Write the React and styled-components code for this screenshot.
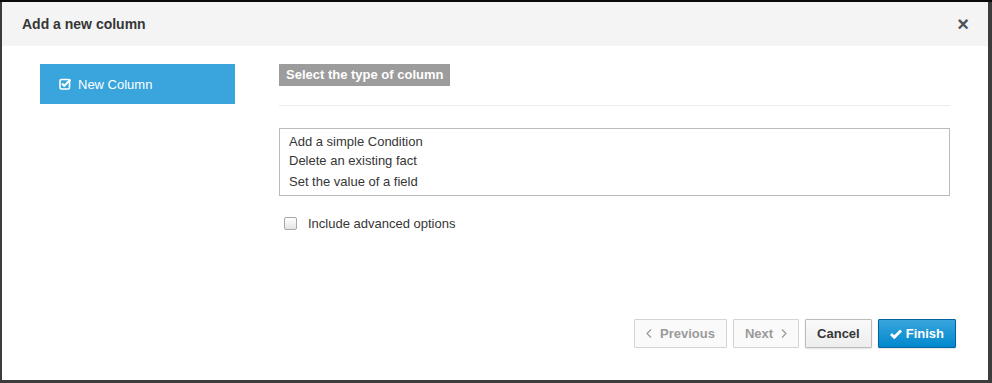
import styled, { createGlobalStyle } from 'styled-components';

const Global = createGlobalStyle`
  html, body {
    margin: 0;
    padding: 0;
    background: #3c3c3c;
    font-family: "Liberation Sans", Arial, sans-serif;
  }
`;

const Backdrop = styled.div`
  width: 992px;
  height: 383px;
  box-sizing: border-box;
  border-top: 2px solid #0a0a0a;
  padding: 0 4px 3px 2px;
  background: #3c3c3c;
`;

const Modal = styled.div`
  height: 100%;
  background: #fff;
  display: flex;
  flex-direction: column;
`;

const Header = styled.header`
  height: 44px;
  background: #f4f4f4;
  display: flex;
  align-items: center;
  justify-content: space-between;
  padding: 0 19px 0 20px;
  flex-shrink: 0;
`;

const Title = styled.h4`
  margin: 0;
  font-size: 14px;
  font-weight: 700;
  color: #363636;
`;

const Close = styled.span`
  font-size: 20px;
  font-weight: 700;
  color: #4d5258;
  line-height: 1;
`;

const Body = styled.div`
  flex: 1;
  display: flex;
  gap: 44px;
  padding: 18px 38px 0 38px;
`;

const Nav = styled.div`
  width: 195px;
  flex-shrink: 0;
`;

const NavItem = styled.div`
  height: 40px;
  background: #39a5dc;
  color: #fff;
  font-size: 13px;
  display: flex;
  align-items: center;
  gap: 6px;
  padding-left: 19px;
`;

const Content = styled.div`
  flex: 1;
`;

const StepLabel = styled.div`
  width: fit-content;
  background: #9c9c9c;
  color: #fff;
  font-size: 13px;
  font-weight: 700;
  padding: 3px 7px 4px;
  line-height: 15px;
`;

const Rule = styled.hr`
  border: 0;
  border-top: 1px solid #ededed;
  margin: 19px 0 22px;
`;

const ListBox = styled.div`
  border: 1px solid #bbb;
  padding: 3px 9px 3px;
`;

const Option = styled.div`
  font-size: 13px;
  color: #363636;
  line-height: 20px;
  height: ${p => p.$h || 19}px;
`;

const CheckRow = styled.label`
  display: flex;
  align-items: center;
  gap: 11px;
  margin: 20px 0 0 5px;
  font-size: 13px;
  color: #363636;
`;

const Box = styled.span`
  width: 11px;
  height: 11px;
  border: 1px solid #a8a8a8;
  border-radius: 2px;
  background: linear-gradient(#fff, #e4e4e4);
`;

const Footer = styled.footer`
  display: flex;
  justify-content: flex-end;
  gap: 6px;
  padding: 0 32px 32px 0;
`;

const Button = styled.button`
  height: 29px;
  box-sizing: border-box;
  font-family: "Liberation Sans", Arial, sans-serif;
  font-size: 13px;
  font-weight: 700;
  padding: 0 ${p => p.$px || 12}px;
  display: flex;
  align-items: center;
  gap: ${p => p.$gap || 6}px;
  border-radius: 1px;
  border: 1px solid ${p => (p.$primary ? '#00659c' : p.$disabled ? '#d4d4d4' : '#bbb')};
  color: ${p => (p.$primary ? '#fff' : p.$disabled ? '#9a9a9a' : '#363636')};
  background: ${p =>
    p.$primary
      ? 'linear-gradient(#39a5dc, #0088ce)'
      : p.$disabled
      ? '#fafafa'
      : 'linear-gradient(#fafafa, #ededed)'};
  box-shadow: ${p => (p.$disabled ? 'none' : '0 1px 2px rgba(0,0,0,0.12)')};
`;

const Chevron = ({ dir }) => (
  <svg width="6" height="9" viewBox="0 0 6 9">
    <polyline
      points={dir === 'left' ? '5,0.5 1,4.5 5,8.5' : '1,0.5 5,4.5 1,8.5'}
      fill="none"
      stroke="#9a9a9a"
      strokeWidth="1.2"
    />
  </svg>
);

const CheckSquare = () => (
  <svg width="13" height="12" viewBox="0 0 13 12">
    <rect x="1" y="1.5" width="9.5" height="9.5" rx="1.5" fill="none" stroke="#fff" strokeWidth="1.6" />
    <polyline points="3,5.5 5.2,7.8 11.5,1.5" fill="none" stroke="#fff" strokeWidth="1.9" />
  </svg>
);

const Check = () => (
  <svg width="12" height="10" viewBox="0 0 12 10">
    <polyline points="1,5 4.3,8.3 11,1.5" fill="none" stroke="#fff" strokeWidth="2.8" />
  </svg>
);

function App() {
  return (
    <>
      <Global />
      <Backdrop>
        <Modal>
          <Header>
            <Title>Add a new column</Title>
            <Close>×</Close>
          </Header>
          <Body>
            <Nav>
              <NavItem>
                <CheckSquare />
                New Column
              </NavItem>
            </Nav>
            <Content>
              <StepLabel>Select the type of column</StepLabel>
              <Rule />
              <ListBox>
                <Option>Add a simple Condition</Option>
                <Option $h={21}>Delete an existing fact</Option>
                <Option $h={20}>Set the value of a field</Option>
              </ListBox>
              <CheckRow>
                <Box />
                Include advanced options
              </CheckRow>
            </Content>
          </Body>
          <Footer>
            <Button $disabled $px={11} $gap={8}>
              <Chevron dir="left" />
              Previous
            </Button>
            <Button $disabled $px={11} $gap={8}>
              Next
              <Chevron dir="right" />
            </Button>
            <Button $px={11}>Cancel</Button>
            <Button $primary $px={11} $gap={4}>
              <Check />
              Finish
            </Button>
          </Footer>
        </Modal>
      </Backdrop>
    </>
  );
}

export default App;
